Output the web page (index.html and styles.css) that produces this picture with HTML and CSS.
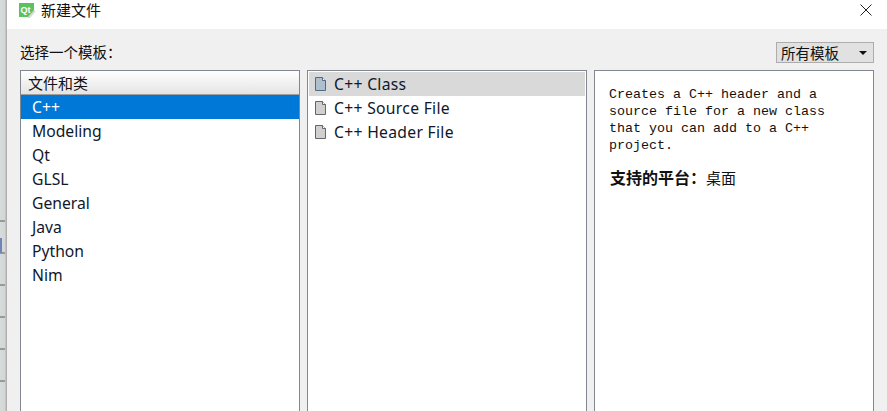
FILE: index.html
```html
<!DOCTYPE html>
<html lang="zh">
<head>
<meta charset="utf-8">
<title>新建文件</title>
<link rel="stylesheet" href="styles.css">
</head>
<body>
<div class="strip"><div class="ticks"><span class="glyph"></span></div></div>
<div class="dialog">
  <header class="titlebar">
    <svg class="logo" width="18" height="15" viewBox="0 0 18 15">
      <path d="M1 0h15v9l-5 5H1z" fill="#5cc25f"/>
      <path d="M9 15l7-8 1.500 1.500L12 15z" fill="#d5d8d5"/>
      <text x="2.500" y="9.500" class="logo-text">Qt</text>
    </svg>
    <span class="title">新建文件</span>
    <svg class="close" width="12" height="12" viewBox="0 0 12 12"><path d="M.5.5l11 11M11.500.5l-11 11" stroke="#222" stroke-width="1" fill="none"/></svg>
  </header>
  <main class="content">
    <div class="toolbar">
      <span class="prompt">选择一个模板<span class="colon">：</span></span>
      <div class="combo"><span>所有模板</span><i class="arrow"></i></div>
    </div>
    <div class="panes">
      <section class="pane">
        <div class="pane-head">文件和类</div>
        <ul class="cats">
          <li class="cat active">C++</li>
          <li class="cat">Modeling</li>
          <li class="cat">Qt</li>
          <li class="cat">GLSL</li>
          <li class="cat">General</li>
          <li class="cat">Java</li>
          <li class="cat">Python</li>
          <li class="cat">Nim</li>
        </ul>
      </section>
      <section class="pane pane-files">
        <ul class="files">
          <li class="file current">
            <svg class="doc" width="11" height="14" viewBox="0 0 11 14"><path d="M.5.5h7l3 3v10H.5z" fill="#b0bfcc" stroke="#4a6d8c"/><path d="M7.500.5v3h3" fill="#fff" stroke="#4a6d8c"/></svg>
            C++ Class
          </li>
          <li class="file">
            <svg class="doc" width="11" height="14" viewBox="0 0 11 14"><path d="M.5.5h7l3 3v10H.5z" fill="#d0d0d0" stroke="#666"/><path d="M7.500.5v3h3" fill="#fff" stroke="#666"/></svg>
            C++ Source File
          </li>
          <li class="file">
            <svg class="doc" width="11" height="14" viewBox="0 0 11 14"><path d="M.5.5h7l3 3v10H.5z" fill="#d0d0d0" stroke="#666"/><path d="M7.500.5v3h3" fill="#fff" stroke="#666"/></svg>
            C++ Header File
          </li>
        </ul>
      </section>
      <section class="pane pane-desc">
        <p class="desc">Creates a C++ header and a<br>source file for a new class<br>that you can add to a C++<br>project.</p>
        <p class="platform"><b>支持的平台<span class="colon">：</span></b><span class="platform-value">桌面</span></p>
      </section>
    </div>
  </main>
</div>
</body>
</html>
```
FILE: styles.css
```css
* { box-sizing: border-box; }
html, body { margin: 0; height: 411px; overflow: hidden; }
body { display: flex; background: #f0f0f0; font-family: "Noto Sans", "Noto Sans CJK SC", sans-serif; color: #111; }
.strip { width: 7px; flex: none; background: linear-gradient(90deg, #d4dcdc, #d6d6d6 65%, #a6a6a6); }
.ticks { position: relative; width: 5px; height: 191px; margin-top: 220px; background: repeating-linear-gradient(#999 0 2px, transparent 2px 32px); }
.glyph { position: absolute; left: 0; top: 18px; width: 2px; height: 15px; background: #6f86b4; }
.dialog { flex: 1; min-width: 0; display: flex; flex-direction: column; }
.titlebar { height: 29px; flex: none; background: #fff; display: flex; align-items: center; padding: 0 15px 9px 11px; }
.logo { flex: none; }
.logo-text { font: bold 9px "Liberation Sans", sans-serif; fill: #fff; }
.title { margin-left: 5px; font: 15px/20px "Noto Sans CJK SC", sans-serif; }
.close { margin-left: auto; }
.content { flex: 1; min-height: 0; padding: 0 13px; display: flex; flex-direction: column; }
.toolbar { height: 41px; flex: none; display: flex; justify-content: space-between; align-items: flex-start; padding-top: 13px; }
.prompt { font: 14.500px/20px "Noto Sans CJK SC", sans-serif; margin-top: 0; }
.colon { font-family: "Noto Sans CJK TC", sans-serif; }
.combo { width: 98px; height: 21px; background: #e1e1e1; border: 1px solid #adadad; display: flex; align-items: center; justify-content: space-between; padding: 0 6px 0 4px; font: 14.500px/19px "Noto Sans CJK SC", sans-serif; }
.arrow { width: 0; height: 0; border: 4px solid transparent; border-top: 4px solid #111; border-bottom: 0; }
.panes { flex: 1; min-height: 0; display: flex; gap: 7px; }
.pane { width: 280px; background: #fff; border: 1px solid #828790; border-bottom: 0; }
.pane-files { padding: 1px; }
.pane-desc { padding: 15px 15px; }
.pane-head { height: 24px; padding-left: 7px; font: 15px/23px "Noto Sans CJK SC", sans-serif; background: linear-gradient(#fff, #e4e4e4); border-bottom: 1px solid #a0a0a0; }
ul { list-style: none; margin: 0; padding: 0; }
.cat { height: 24px; padding-left: 11px; font: 15.700px/24px "Noto Sans", sans-serif; color: #10182a; }
.cat.active { background: #0078d7; color: #fff; }
.file { height: 24px; padding-left: 6px; display: flex; align-items: center; gap: 8px; font: 15.700px/24px "Noto Sans", sans-serif; letter-spacing: .3px; color: #10182a; }
.file.current { background: #d9d9d9; }
.doc { flex: none; }
.desc { margin: 0 0 0 -1px; font: 13.330px/17px "Liberation Mono", monospace; }
.platform { margin: 14px 0 0; font: 15px/18px "Noto Sans CJK SC", sans-serif; }
.platform b { font-size: 16px; }
```
